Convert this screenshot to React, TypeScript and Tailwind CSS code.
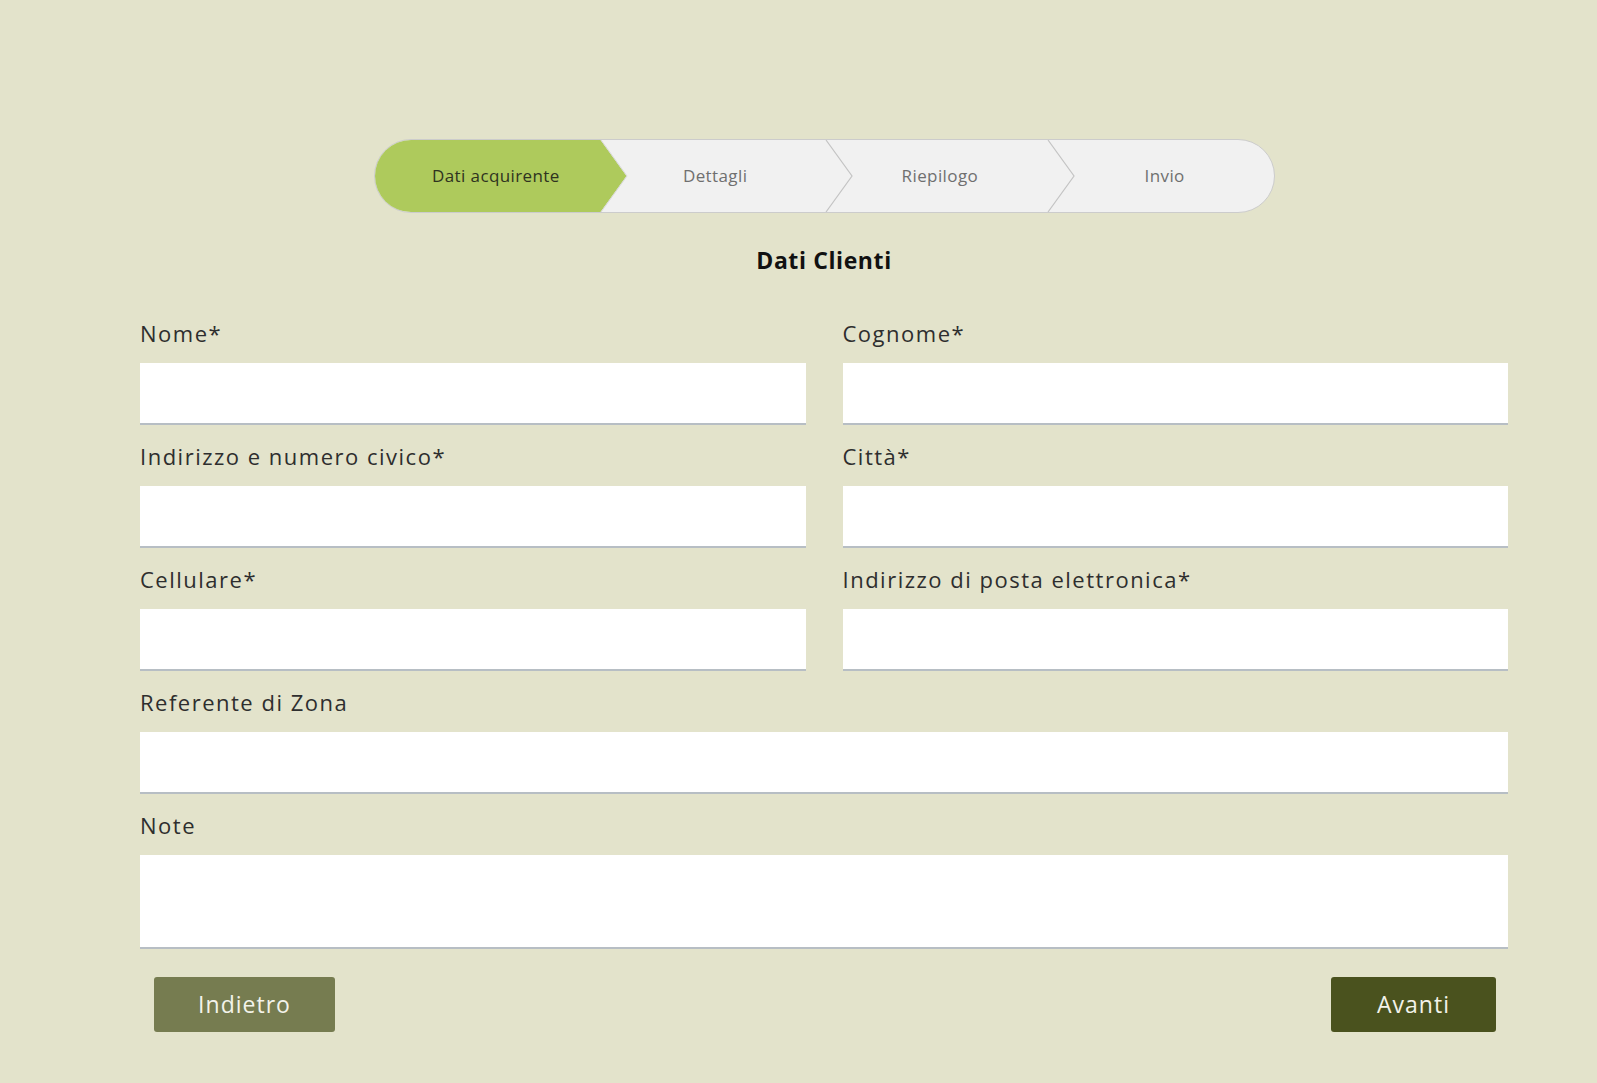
import React from "react";

const steps = ["Dati acquirente", "Dettagli", "Riepilogo", "Invio"];

function Stepper() {
  return (
    <div className="relative mx-auto flex h-[74px] w-[901px] overflow-hidden rounded-full border border-[#cccccc] bg-[#f1f1f1]">
      <div
        className="absolute left-0 top-0 h-full w-[252px] bg-[#aeca5c]"
        style={{ clipPath: "polygon(0 0, 226px 0, 252px 50%, 226px 100%, 0 100%)" }}
      />
      <svg className="absolute left-[225px] top-0 h-full w-[28px]" viewBox="0 0 28 74" preserveAspectRatio="none">
        <path d="M1 0 L27 37 L1 74" fill="none" stroke="#d6d6d6" strokeWidth="1" />
      </svg>
      <svg className="absolute left-[450px] top-0 h-full w-[28px]" viewBox="0 0 28 74" preserveAspectRatio="none">
        <path d="M1 0 L27 37 L1 74" fill="none" stroke="#c4c4c4" strokeWidth="1.2" />
      </svg>
      <svg className="absolute left-[672px] top-0 h-full w-[28px]" viewBox="0 0 28 74" preserveAspectRatio="none">
        <path d="M1 0 L27 37 L1 74" fill="none" stroke="#c4c4c4" strokeWidth="1.2" />
      </svg>
      {steps.map((s, i) => (
        <div
          key={s}
          className={
            "relative z-10 flex h-full w-[225px] items-center justify-center text-[17px] tracking-[0.4px] " +
            (i === 0 ? "pl-[18px] text-[#2f3320]" : "pl-[7px] text-[#6f6f6f]")
          }
        >
          {s}
        </div>
      ))}
    </div>
  );
}

function Field({ label, tall }: { label: string; tall?: boolean }) {
  return (
    <div className="flex flex-col">
      <div className="h-[30px] text-[22px] leading-[30px] tracking-[1.5px] text-[#2e2e2e]">{label}</div>
      <div
        className={
          "mt-[15px] w-full border-b-2 border-[#b7bec4] bg-white " + (tall ? "h-[94px]" : "h-[62px]")
        }
      />
    </div>
  );
}

export default function App() {
  return (
    <div
      className="min-h-[1083px] w-full bg-[#e3e3cb] pt-[139px]"
      style={{ fontFamily: "'Open Sans', 'Noto Sans', sans-serif" }}
    >
      <div className="ml-[140px] w-[1368px]">
        <Stepper />
        <div className="mt-[32px] text-center text-[23px] font-bold leading-[30px] tracking-[0.6px] text-[#111111]">
          Dati Clienti
        </div>
        <div className="mt-[43px] grid grid-cols-2 gap-x-[37px] gap-y-[16px]">
          <Field label="Nome*" />
          <Field label="Cognome*" />
          <Field label="Indirizzo e numero civico*" />
          <Field label="Città*" />
          <Field label="Cellulare*" />
          <Field label="Indirizzo di posta elettronica*" />
          <div className="col-span-2">
            <Field label="Referente di Zona" />
          </div>
          <div className="col-span-2">
            <Field label="Note" tall />
          </div>
        </div>
        <div className="mt-[28px] flex justify-between px-[14px] pr-[12px]">
          <button className="h-[55px] w-[181px] rounded-[3px] bg-[#767c50] text-[23px] tracking-[1px] text-[#f3f3ea]">
            Indietro
          </button>
          <button className="h-[55px] w-[165px] rounded-[3px] bg-[#4a521e] text-[23px] tracking-[1px] text-[#f3f3ea]">
            Avanti
          </button>
        </div>
      </div>
    </div>
  );
}
